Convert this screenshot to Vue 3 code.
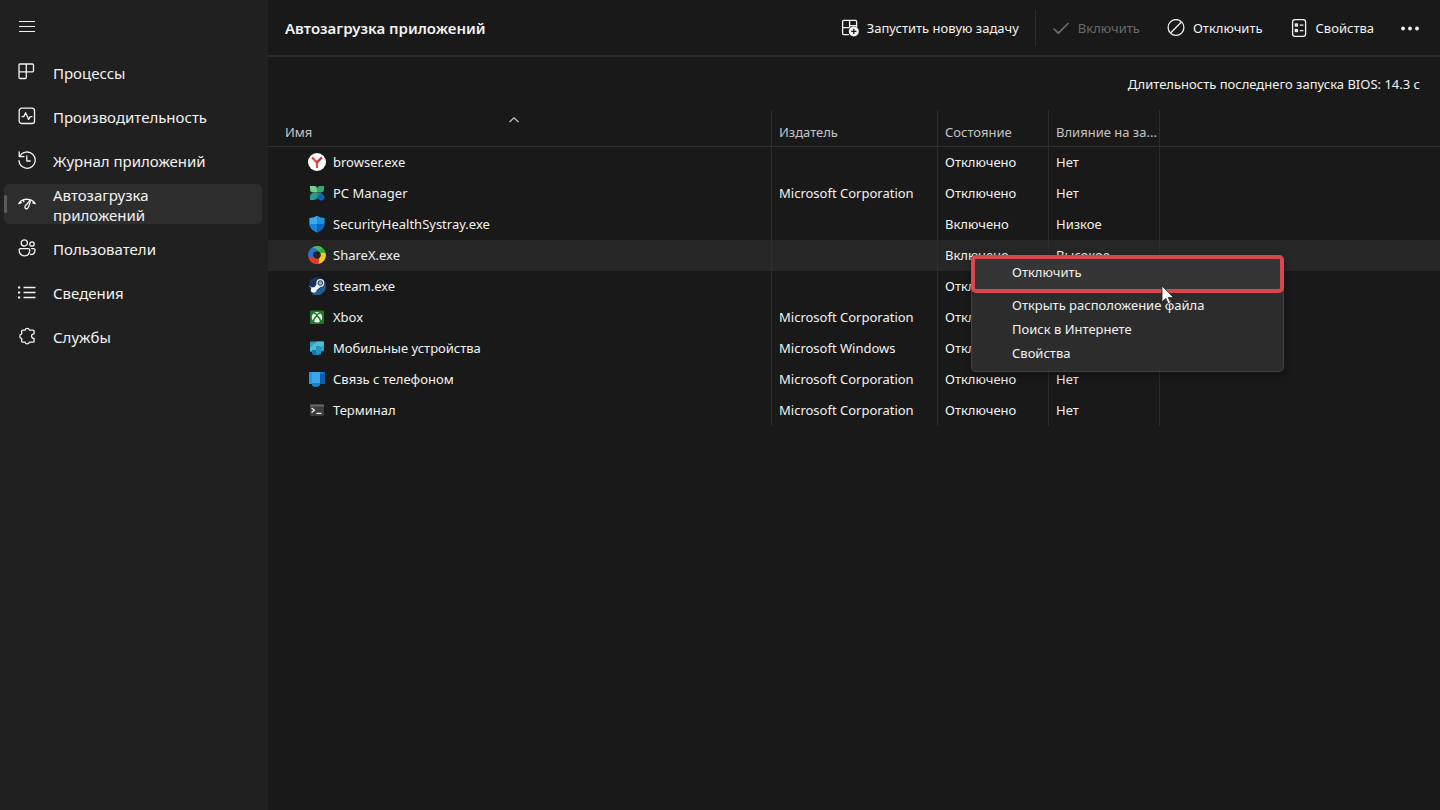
<script setup>
import { ref } from 'vue'

const nav = [
  { id: 'processes', label: 'Процессы' },
  { id: 'performance', label: 'Производительность' },
  { id: 'history', label: 'Журнал приложений' },
  { id: 'startup', label: 'Автозагрузка приложений' },
  { id: 'users', label: 'Пользователи' },
  { id: 'details', label: 'Сведения' },
  { id: 'services', label: 'Службы' },
]
const current = ref('startup')

const off = 'Отключено'
const on = 'Включено'
const ms = 'Microsoft Corporation'
const rows = [
  { icon: 'yandex', name: 'browser.exe', publisher: '', state: off, impact: 'Нет' },
  { icon: 'pcm', name: 'PC Manager', publisher: ms, state: off, impact: 'Нет' },
  { icon: 'shield', name: 'SecurityHealthSystray.exe', publisher: '', state: on, impact: 'Низкое' },
  { icon: 'sharex', name: 'ShareX.exe', publisher: '', state: on, impact: 'Высокое' },
  { icon: 'steam', name: 'steam.exe', publisher: '', state: off, impact: 'Нет' },
  { icon: 'xbox', name: 'Xbox', publisher: ms, state: off, impact: 'Нет' },
  { icon: 'mobile', name: 'Мобильные устройства', publisher: 'Microsoft Windows', state: off, impact: 'Нет' },
  { icon: 'phone', name: 'Связь с телефоном', publisher: ms, state: off, impact: 'Нет' },
  { icon: 'terminal', name: 'Терминал', publisher: ms, state: off, impact: 'Нет' },
]
const selected = ref('ShareX.exe')
</script>

<template>
  <div class="window">
    <aside class="sidebar">
      <button class="burger" type="button" aria-label="Меню">
        <svg width="18" height="18" viewBox="0 0 18 18" fill="none" stroke="currentColor">
          <path d="M1 4.500h16M1 9.500h16M1 14.500h16" />
        </svg>
      </button>
      <nav class="nav">
        <a
          v-for="item in nav"
          :key="item.id"
          href="#"
          class="nav-item"
          :class="{ active: item.id === current }"
          @click.prevent="current = item.id"
        >
          <svg width="18" height="18" viewBox="0 0 18 18" fill="none" stroke="currentColor" stroke-width="1.3" stroke-linecap="round" stroke-linejoin="round">
            <path v-if="item.id === 'processes'" d="M2 1h12.500a1 1 0 0 1 1 1v5.800a1 1 0 0 1-1 1H1M8.300 1v13.500a1 1 0 0 1-1 1H2a1 1 0 0 1-1-1V2a1 1 0 0 1 1-1" />
            <template v-else-if="item.id === 'performance'">
              <rect x="1.2" y="1.2" width="15.300" height="15.300" rx="2.6" />
              <path d="M4 9.6h1.800L7.600 5.800l3 6.600 1.600-2.800H14" />
            </template>
            <template v-else-if="item.id === 'history'">
              <path d="M1.200 .8v4.800h4.800M1.800 5.600A8.100 8.100 0 1 1 1 9.600M8.800 5v5h3.400" />
            </template>
            <template v-else-if="item.id === 'startup'">
              <path d="M.8 8.600c1-1.800 2.400-3 4.200-3.700M.8 8.600l2.600-.9M5 4.900c2.200-.8 4.500-.8 6.600-.3M13.800 5.400c1.500.8 2.600 1.900 3.400 3.200M17.200 8.600l-2.400-.8M12.800 4.600 7.800 10.200c-2 2.200-.2 4.400 1.700 3.200 1.200-.8 1.400-2 1.700-3.400zM5 4.900l.9 1.800" />
            </template>
            <template v-else-if="item.id === 'users'">
              <circle cx="6.300" cy="3.900" r="3.100" />
              <circle cx="14" cy="5" r="2.200" />
              <path d="M2.400 9.600h8a1.300 1.300 0 0 1 1.300 1.300c0 3.700-2.200 6-5.300 6s-5.300-2.300-5.300-6a1.300 1.300 0 0 1 1.300-1.300zM13.600 9.600h2.100a1.300 1.300 0 0 1 1.300 1.300c0 3-1.600 4.600-4.300 4.600" />
            </template>
            <template v-else-if="item.id === 'details'">
              <path d="M5.500 4.500h12M5.500 9.500h12M5.500 14.500h12" stroke-linecap="butt" />
              <path d="M0 4.500h2.200M0 9.500h2.200M0 14.500h2.200" stroke-width="2.200" stroke-linecap="butt" />
            </template>
            <path v-else d="M3.700 4.200a1 1 0 0 1 1-1h2.400a2.200 2.200 0 0 1 4.300 0h3.700a1 1 0 0 1 1 1v2.600c-3.400-.2-3.400 4.800 0 4.600v2.800a1 1 0 0 1-1 1h-3.700a2.200 2.200 0 0 1-4.300 0H4.700a1 1 0 0 1-1-1v-2.700a2.400 2.400 0 0 1 0-4.700z" />
          </svg>
          <span class="nav-label">{{ item.label }}</span>
        </a>
      </nav>
    </aside>

    <main class="main">
      <header class="toolbar">
        <h1>Автозагрузка приложений</h1>
        <button type="button" class="tool">
          <svg width="18" height="18" viewBox="0 0 18 18" fill="none" stroke="currentColor" stroke-width="1.300">
            <path d="M8 15.600H2.600a1 1 0 0 1-1-1V2.400a1 1 0 0 1 1-1h12a1 1 0 0 1 1 1V8M8.600 1.400v7M1.600 8.600h7M8.600 6.600H15" />
            <circle cx="12.800" cy="12.400" r="5" fill="currentColor" stroke="none" />
            <path d="M12.800 9.800v5.200M10.200 12.400h5.200" stroke="#191919" />
          </svg>
          Запустить новую задачу
        </button>
        <span class="separator"></span>
        <button type="button" class="tool" disabled>
          <svg width="18" height="18" viewBox="0 0 18 18" fill="none" stroke="currentColor" stroke-width="1.700">
            <path d="M1.500 9.500 6.300 14.200 16.500 4" />
          </svg>
          Включить
        </button>
        <button type="button" class="tool">
          <svg width="18" height="18" viewBox="0 0 18 18" fill="none" stroke="currentColor" stroke-width="1.300">
            <circle cx="9" cy="8.500" r="7.900" />
            <path d="M3.600 14 14.400 3" />
          </svg>
          Отключить
        </button>
        <button type="button" class="tool">
          <svg width="18" height="18" viewBox="0 0 18 18" fill="none" stroke="currentColor" stroke-width="1.300">
            <rect x="2.600" y=".7" width="13" height="16.600" rx="2.400" />
            <path d="M9.800 6.200h3.600M9.800 11.600h3.600" />
            <rect x="5.400" y="5" width="2" height="2" />
            <rect x="5.400" y="10.500" width="2" height="2" />
          </svg>
          Свойства
        </button>
        <button type="button" class="tool" aria-label="Дополнительно">
          <svg width="18" height="18" viewBox="0 0 18 18" fill="currentColor">
            <circle cx="2" cy="9.500" r="1.900" /><circle cx="9" cy="9.500" r="1.900" /><circle cx="16" cy="9.500" r="1.900" />
          </svg>
        </button>
      </header>

      <p class="bios">Длительность последнего запуска BIOS: 14.3 с</p>

      <table class="list">
        <colgroup>
          <col class="c-name" /><col class="c-publisher" /><col class="c-state" /><col class="c-impact" /><col />
        </colgroup>
        <thead>
          <tr>
            <th class="name">
              Имя
              <svg class="sort" width="12" height="8" viewBox="0 0 12 8" fill="none" stroke="currentColor" stroke-width="1.300">
                <path d="M1.500 6 6 1.800 10.500 6" />
              </svg>
            </th>
            <th>Издатель</th>
            <th>Состояние</th>
            <th>Влияние на за...</th>
            <th class="rest"></th>
          </tr>
        </thead>
        <tbody>
          <tr v-for="row in rows" :key="row.name" :class="{ selected: row.name === selected }" @click="selected = row.name">
            <td class="name">
              <div class="app">
                <svg width="18" height="18" viewBox="0 0 18 18">
                  <g v-if="row.icon === 'yandex'">
                    <circle cx="9" cy="9" r="9" fill="#fff" />
                    <path d="M4 4.400 9 9.400v5.600" fill="none" stroke="#e8502e" stroke-width="2.200" />
                    <path d="M14 4.400 9 9.400" fill="none" stroke="#b0345c" stroke-width="2.200" />
                  </g>
                  <g v-else-if="row.icon === 'pcm'">
                    <path d="M2 2h4.500Q9 2 9 5v3.500H5.500Q2 8.500 2 5z" fill="#6fd08c" />
                    <path d="M16 2h-3.500Q9 2 9 5v3.500h3.500Q16 8.500 16 5z" fill="#38a878" />
                    <path d="M2 16h3.500Q9 16 9 13V9H5.500Q2 9 2 12.500z" fill="#279a94" />
                    <path d="M9 9h3q2.500 0 3 2l-2 4q-4 1-4-2.500z" fill="#1d8794" />
                    <circle cx="13.400" cy="13.300" r="3.100" fill="#1260b8" />
                  </g>
                  <g v-else-if="row.icon === 'shield'">
                    <path d="M9 .8Q5.500 3 1.400 3v5.800Q1.500 14 9 17.400z" fill="#3cabed" />
                    <path d="M9 .8Q12.500 3 16.600 3v5.800Q16.500 14 9 17.400z" fill="#2290df" />
                    <path d="M1.400 9H9v8.400Q1.800 14 1.400 9z" fill="#1683d8" />
                    <path d="M16.600 9H9v8.400Q16.200 14 16.600 9z" fill="#0d63ba" />
                  </g>
                  <g v-else-if="row.icon === 'sharex'">
                    <path d="M9 0a9 9 0 0 1 8.900 8Q14 11 12.500 8 11.500 4.500 7 5.500 7 2 9 0z" fill="#39a845" />
                    <path d="M17.900 8A9 9 0 0 1 10 18q-3-4 .5-5.500Q13.500 11 12.500 7 16 6 17.900 8z" fill="#f5c928" />
                    <path d="M10.500 18A9 9 0 0 1 .1 10Q3 7.500 5.300 10q2 3.700 6 2.500-.3 3.500-.8 5.500z" fill="#e6392b" />
                    <path d="M.1 10A9 9 0 0 1 9 0Q12 3 8.500 5q-4.500 1-3 6Q2 12 .1 10z" fill="#2375d1" />
                    <path d="M4.500 1.400A9 9 0 0 1 9 0q3.500 0 5.500 2Q12 5 9 3.500 7 2 4.500 1.400z" fill="#52bb4d" />
                    <circle cx="9" cy="9" r="3.500" fill="#242424" />
                  </g>
                  <g v-else-if="row.icon === 'steam'">
                    <path d="M1.500 4.500A9 9 0 1 1 1.600 14z" fill="#17355c" />
                    <path d="M4 17A9 9 0 0 0 17.500 8z" fill="#1f5f94" />
                    <path d="M0 8.700 5.800 11 9.300 6.400l4 3.200L8 13.600z" fill="#f4f6f8" />
                    <circle cx="12.300" cy="6" r="4" fill="#e8edf2" />
                    <circle cx="12.300" cy="6" r="2.300" fill="#9ab2c8" stroke="#203d60" stroke-width="1" />
                    <circle cx="5.700" cy="13" r="2.800" fill="#f4f6f8" />
                  </g>
                  <g v-else-if="row.icon === 'xbox'">
                    <rect x="2" y="2.500" width="14" height="13.500" rx="1" fill="#1b7a24" />
                    <circle cx="9" cy="9.300" r="5.200" fill="#f2f7f2" />
                    <path d="M5.300 13.600Q6 10 9 7.600q3 2.400 3.700 6M5.500 5.200Q7 5 9 6.800q2-1.800 3.500-1.600" fill="none" stroke="#1b7a24" stroke-width="1.500" />
                  </g>
                  <g v-else-if="row.icon === 'mobile'">
                    <rect x="2" y="2.500" width="14" height="10" rx="1" fill="#2fa0bf" />
                    <path d="M2 8.500 9 2.500h6a1 1 0 0 1 1 1v2L9 12.500H2z" fill="#4cbcd2" />
                    <path d="M4 11h7v5H5.200L4 14.500z" fill="#1679a5" />
                    <rect x="8" y="7" width="5" height="8.500" rx=".8" fill="#2496c2" />
                  </g>
                  <g v-else-if="row.icon === 'phone'">
                    <rect x="1" y="2" width="16" height="12" rx="1" fill="#1878c4" />
                    <rect x="12" y="4" width="5" height="10" fill="#0d5ea6" />
                    <path d="M4 2h8v12.500L10 16.500H5.500L4 15z" fill="#38a7eb" />
                    <path d="M4 13h8v2l-1.500 1.500H5.500L4 15z" fill="#1c80ca" />
                    <path d="M1 2h3v12H2a1 1 0 0 1-1-1z" fill="#2f96dc" />
                  </g>
                  <g v-else>
                    <rect x="2" y="3.500" width="14" height="11.500" rx="1" fill="#3c3c3c" />
                    <path d="M2 5.500v-1a1 1 0 0 1 1-1h12a1 1 0 0 1 1 1v1z" fill="#686868" />
                    <path d="m3.600 7 2.800 2.300-2.800 2.300M8.500 12.300h5" fill="none" stroke="#eee" stroke-width="1.300" />
                  </g>
                </svg>
                {{ row.name }}
              </div>
            </td>
            <td>{{ row.publisher }}</td>
            <td>{{ row.state }}</td>
            <td>{{ row.impact }}</td>
            <td class="rest"></td>
          </tr>
        </tbody>
      </table>

      <div class="menu" role="menu">
        <button type="button" role="menuitem" class="hot">Отключить</button>
        <button type="button" role="menuitem">Открыть расположение файла</button>
        <button type="button" role="menuitem">Поиск в Интернете</button>
        <button type="button" role="menuitem">Свойства</button>
        <svg class="cursor" width="14" height="20" viewBox="0 0 14 20">
          <path d="M1 1v16l3.800-3.600 2.400 5.400 2.400-1-2.300-5.200h5.200z" fill="#fff" stroke="#222" stroke-width=".8" />
        </svg>
      </div>
    </main>
  </div>
</template>

<style>
body {
  margin: 0;
  background: #191919;
}
</style>

<style scoped>
.window {
  display: flex;
  min-height: 100vh;
  background: #191919;
  color: #f2f2f2;
  font: 13px/20px "Noto Sans", "Open Sans", sans-serif;
}
button {
  font: inherit;
  color: inherit;
  background: none;
  border: 0;
  padding: 0;
}
.sidebar {
  flex: none;
  width: 268px;
  box-sizing: border-box;
  padding: 0 6px 0 4px;
  background: #202020;
}
.burger {
  display: flex;
  align-items: center;
  height: 52px;
  padding-left: 14px;
}
.nav {
  display: flex;
  flex-direction: column;
  gap: 4px;
}
.nav-item {
  display: flex;
  align-items: center;
  gap: 17px;
  height: 40px;
  padding-left: 14px;
  border-radius: 5px;
  overflow: hidden;
  color: inherit;
  text-decoration: none;
  font-size: 15px;
}
.nav-item svg {
  flex: none;
}
.nav-label {
  max-width: 160px;
  padding-top: 2px;
}
.active {
  position: relative;
  background: #2d2d2d;
}
.active::before {
  content: "";
  position: absolute;
  left: 0;
  top: 11px;
  width: 3px;
  height: 18px;
  border-radius: 2px;
  background: #5c5c5c;
}
.main {
  position: relative;
  flex: 1;
  min-width: 0;
}
.toolbar {
  display: flex;
  align-items: center;
  gap: 27px;
  height: 55px;
  padding: 0 21px 0 17px;
  border-bottom: 2px solid #2a2a2a;
}
h1 {
  flex: 1;
  margin: 0;
  font-size: 15px;
  line-height: 20px;
  font-weight: 600;
}
.tool {
  display: flex;
  align-items: center;
  gap: 8px;
  white-space: nowrap;
}
.tool:disabled {
  color: #6a6a6a;
}
.separator {
  width: 1px;
  height: 36px;
  margin: 0 -11px;
  background: #2d2d2d;
}
.bios {
  margin: 0;
  padding: 17px 20px 16px;
  text-align: right;
}
.list {
  width: 100%;
  table-layout: fixed;
  border-collapse: separate;
  border-spacing: 0;
}
.c-name {
  width: 504px;
}
.c-publisher {
  width: 166px;
}
.c-state,
.c-impact {
  width: 111px;
}
th,
td {
  box-sizing: border-box;
  height: 31px;
  padding: 0 2px 2px 7px;
  border-right: 1px solid #2d2d2d;
  text-align: left;
  white-space: nowrap;
}
th {
  position: relative;
  height: 37px;
  padding-top: 10px;
  border-bottom: 1px solid #303030;
  color: #c4c4c4;
  font-weight: 400;
}
th.name {
  padding-left: 17px;
}
td.name {
  padding-left: 40px;
}
.rest {
  border-right: 0;
}
.sort {
  position: absolute;
  left: 240px;
  top: 6px;
}
.app {
  display: flex;
  align-items: center;
  gap: 7px;
}
.selected td {
  background: #262626;
}
.menu {
  position: absolute;
  left: 703px;
  top: 255px;
  width: 313px;
  box-sizing: border-box;
  padding-bottom: 7px;
  border-radius: 5px;
  background: #2c2c2c;
  box-shadow: inset 0 0 0 1px #404040, 0 4px 8px rgba(0, 0, 0, 0.3);
}
.menu button {
  display: block;
  width: 100%;
  height: 24px;
  padding-left: 41px;
  text-align: left;
}
.menu .hot {
  height: 38px;
  padding: 0 0 4px 37px;
  border: 4px solid #d8474c;
  border-radius: 5px;
  background: #353535;
}
.cursor {
  position: absolute;
  left: 190px;
  top: 30px;
}
</style>
